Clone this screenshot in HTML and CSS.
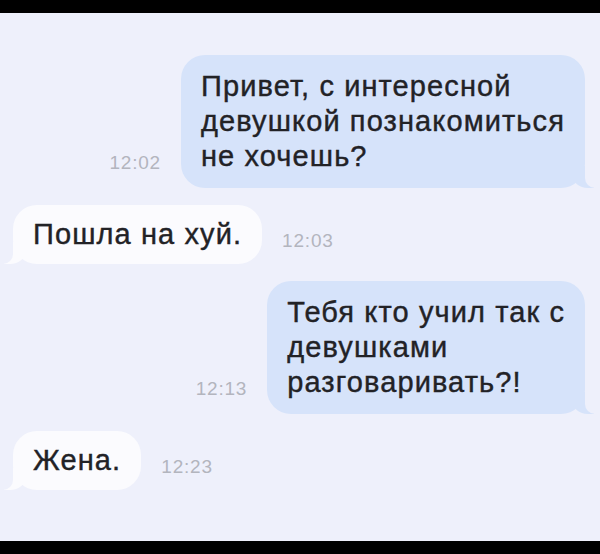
FILE: index.html
```html
<!DOCTYPE html>
<html lang="ru">
<head>
  <meta charset="UTF-8">
  <meta name="viewport" content="width=device-width, initial-scale=1.0">
  <title>Сообщения</title>
  <link rel="stylesheet" href="styles.css">
</head>
<body>
  <div class="chat">
    <div class="row out">
      <span class="time">12:02</span>
      <div class="bubble">Привет, с интересной<br>девушкой познакомиться<br>не хочешь?</div>
    </div>

    <div class="row in">
      <div class="bubble">Пошла на хуй.</div>
      <span class="time">12:03</span>
    </div>

    <div class="row out">
      <span class="time">12:13</span>
      <div class="bubble">Тебя кто учил так с<br>девушками<br>разговаривать?!</div>
    </div>

    <div class="row in">
      <div class="bubble">Жена.</div>
      <span class="time">12:23</span>
    </div>
  </div>
</body>
</html>
```

FILE: styles.css
```css
body {
  margin: 0;
  background: #000;
  font-family: "Liberation Sans", Arial, sans-serif;
  height: 554px;
  overflow: hidden;
}

.chat {
  margin: 13px 0;
  height: 528px;
  box-sizing: border-box;
  padding: 42px 15px 0 13px;
  background: #eef0fb;
  display: flex;
  flex-direction: column;
  gap: 17px;
}

.row {
  display: flex;
  align-items: flex-end;
  gap: 20px;
}

.row.out {
  justify-content: flex-end;
}

.bubble {
  position: relative;
  padding: 12px 20px;
  border-radius: 24px;
  font-size: 29px;
  line-height: 35px;
  letter-spacing: 1.1px;
  color: #222226;
  -webkit-text-stroke: 0.4px #222226;
}

.out .bubble {
  padding: 14px 20px;
  background: #d6e3fa;
}

.in .bubble {
  background: #fbfbfe;
}

/* bubble tails */
.bubble::before,
.bubble::after {
  content: "";
  position: absolute;
  bottom: 0;
  height: 22px;
}

.out .bubble::before {
  right: -9px;
  width: 22px;
  background: #d6e3fa;
  border-bottom-left-radius: 16px 14px;
}

.out .bubble::after {
  right: -12px;
  width: 12px;
  background: #eef0fb;
  border-bottom-left-radius: 10px;
}

.in .bubble::before {
  left: -9px;
  width: 22px;
  background: #fbfbfe;
  border-bottom-right-radius: 16px 14px;
}

.in .bubble::after {
  left: -12px;
  width: 12px;
  background: #eef0fb;
  border-bottom-right-radius: 10px;
}

.time {
  font-size: 19px;
  letter-spacing: 0.8px;
  color: #b3b5be;
  margin-bottom: 14px;
}

.in .time {
  margin-bottom: 12px;
}
```
